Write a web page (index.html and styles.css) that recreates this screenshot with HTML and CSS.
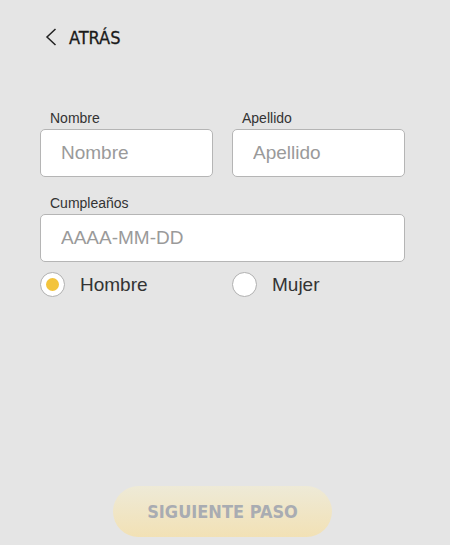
FILE: index.html
```html
<!DOCTYPE html>
<html lang="es">
<head>
<meta charset="utf-8">
<link rel="stylesheet" href="styles.css">
</head>
<body>
<div class="page">
  <a class="back" href="#">
    <svg class="chev" width="12" height="18" viewBox="0 0 12 18"><path d="M10.5 1 L2 9 L10.5 17" fill="none" stroke="#222" stroke-width="1.5"/></svg>
    <span>ATRÁS</span>
  </a>
  <form class="form">
    <div class="row two">
      <div class="field">
        <label class="lbl">Nombre</label>
        <input class="inp" type="text" placeholder="Nombre">
      </div>
      <div class="field">
        <label class="lbl">Apellido</label>
        <input class="inp" type="text" placeholder="Apellido">
      </div>
    </div>
    <div class="row">
      <div class="field">
        <label class="lbl">Cumpleaños</label>
        <input class="inp" type="text" placeholder="AAAA-MM-DD">
      </div>
    </div>
    <div class="row two radios">
      <label class="radio"><span class="dot on"></span><span>Hombre</span></label>
      <label class="radio"><span class="dot"></span><span>Mujer</span></label>
    </div>
  </form>
  <div class="actions">
    <button class="next" type="button">SIGUIENTE PASO</button>
  </div>
</div>
</body>
</html>
```

FILE: styles.css
```css
html, body {
  margin: 0;
  padding: 0;
  background: #e5e5e5;
}
body {
  font-family: "Liberation Sans", Arial, sans-serif;
  color: #333;
}
.page {
  height: 545px;
  display: flex;
  flex-direction: column;
  padding: 0 45px 0 40px;
  box-sizing: border-box;
}
.back {
  display: flex;
  align-items: center;
  gap: 12px;
  margin: 27px 0 0 5px;
  height: 20px;
  text-decoration: none;
  color: #1a1a1a;
  font-family: "DejaVu Sans Condensed", "DejaVu Sans", sans-serif;
  font-stretch: condensed;
  font-size: 18px;
  -webkit-text-stroke: 0.3px #1a1a1a;
}
.form {
  margin-top: 63px;
  display: flex;
  flex-direction: column;
}
.row.two {
  display: grid;
  grid-template-columns: 173px 173px;
  column-gap: 19px;
}
.row + .row {
  margin-top: 18px;
}
.field {
  display: flex;
  flex-direction: column;
}
.lbl {
  font-size: 14px;
  line-height: 16px;
  margin: 0 0 3px 10px;
  color: #333;
}
.inp {
  height: 48px;
  box-sizing: border-box;
  border: 1px solid #b5b5b5;
  border-radius: 5px;
  background: #fff;
  padding: 0 20px;
  font-family: "Liberation Sans", Arial, sans-serif;
  font-size: 19px;
  color: #333;
  outline: none;
}
.inp::placeholder {
  color: #9a9a9a;
}
.row.radios {
  margin-top: 10px;
}
.radio {
  display: flex;
  align-items: center;
  gap: 15px;
  font-size: 19px;
  color: #333;
  height: 25px;
}
.dot {
  width: 25px;
  height: 25px;
  box-sizing: border-box;
  border: 1.5px solid #b0b0b0;
  border-radius: 50%;
  background: #fff;
  display: flex;
  align-items: center;
  justify-content: center;
  flex: none;
}
.dot.on::after {
  content: "";
  width: 13px;
  height: 13px;
  border-radius: 50%;
  background: #f3c43c;
}
.actions {
  margin-top: auto;
  margin-bottom: 8px;
  display: flex;
  justify-content: center;
}
.next {
  width: 219px;
  height: 51px;
  border: none;
  border-radius: 26px;
  background: linear-gradient(#eeead7, #f2e1b5);
  color: #a9acb2;
  font-family: "DejaVu Sans Condensed", "DejaVu Sans", sans-serif;
  font-stretch: condensed;
  font-weight: bold;
  font-size: 18px;
  letter-spacing: 0;
}
```
